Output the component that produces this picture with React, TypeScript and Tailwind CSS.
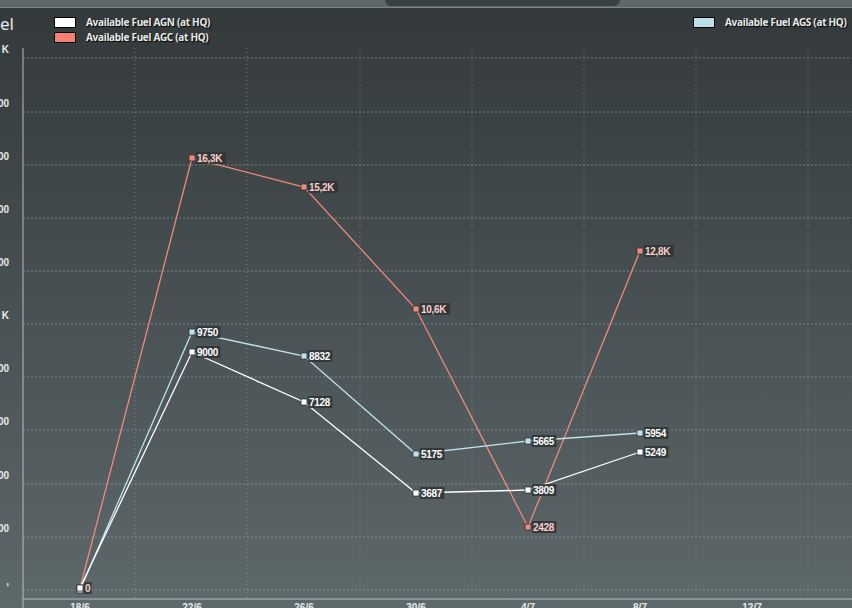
const xs = [80, 192, 304, 416, 528, 640];
const series = [
  { color: "#f08a7a", pts: [588, 158, 187, 309, 527, 251], labels: ["0", "16,3K", "15,2K", "10,6K", "2428", "12,8K"] },
  { color: "#bfe3ec", pts: [590, 332, 356, 454, 441, 433], labels: ["", "9750", "8832", "5175", "5665", "5954"] },
  { color: "#ffffff", pts: [588, 352, 402, 493, 490, 452], labels: ["", "9000", "7128", "3687", "3809", "5249"] },
];
const gridY = [58, 112, 165, 218, 271, 324, 377, 430, 484, 537, 590];
const gridX = [135, 247, 360, 472, 584, 696, 808];
const yLabels = ["K", "00", "00", "00", "00", "K", "00", "00", "00", "00", ","];
const xLabels = ["18/6", "22/6", "26/6", "30/6", "4/7", "8/7", "12/7"];

function Legend({ color, label }: { color: string; label: string }) {
  return (
    <div className="flex items-center gap-[10px] h-[15px] whitespace-nowrap">
      <span className="w-[22px] h-[11px] border border-black" style={{ background: color }} />
      <span className="text-[10px] font-bold tracking-[-0.3px] text-[#e8eaea] [text-shadow:1px_1px_1px_#000]">{label}</span>
    </div>
  );
}

export default function App() {
  return (
    <div className="w-[852px] h-[608px] overflow-hidden bg-gradient-to-b from-[#33393b] to-[#5e696c] font-['Liberation_Sans',Arial,sans-serif] relative">
      <div className="h-[8px] bg-[#5d686a] border-b border-[#7b8587] flex">
        <div className="ml-[385px] w-[235px] h-[6px] bg-[#3a4143] rounded-b-md" />
      </div>
      <div className="absolute left-0 top-[11px] text-[17px] text-[#e8eaea]">el</div>
      <div className="absolute left-[54px] top-[15px] flex flex-col">
        <Legend color="#ffffff" label="Available Fuel AGN (at HQ)" />
        <Legend color="#f88070" label="Available Fuel AGC (at HQ)" />
      </div>
      <div className="absolute left-[693px] top-[15px]">
        <Legend color="#b8e0ea" label="Available Fuel AGS (at HQ)" />
      </div>
      <svg className="absolute left-0 top-0" width="852" height="608" fontFamily="'Liberation Sans', Arial, sans-serif">
        {gridY.map((y) => (
          <line key={y} x1="23" x2="852" y1={y} y2={y} stroke="#9aa3a5" strokeOpacity="0.6" strokeDasharray="2 2" />
        ))}
        {gridX.map((x) => (
          <line key={x} x1={x} x2={x} y1="48" y2="599" stroke="#9aa3a5" strokeOpacity="0.6" strokeDasharray="1 3" />
        ))}
        <line x1="23" x2="23" y1="48" y2="608" stroke="#b5bcbe" />
        <line x1="23" x2="852" y1="599" y2="599" stroke="#b5bcbe" />
        {yLabels.map((t, i) => (
          <text key={i} x="9" y={gridY[i] - 5} textAnchor="end" fontSize="10" fontWeight="bold" fill="#e8eaea">{t}</text>
        ))}
        {xLabels.map((t, i) => (
          <text key={t} x={80 + i * 112} y="611" textAnchor="middle" fontSize="10" fontWeight="bold" fill="#e8eaea">{t}</text>
        ))}
        {series.map((s) => (
          <polyline key={s.color} fill="none" stroke={s.color} strokeWidth="1.3" points={s.pts.map((y, i) => `${xs[i]},${y}`).join(" ")} />
        ))}
        {series.map((s) =>
          s.pts.map((y, i) => (
            <g key={s.color + i}>
              <rect x={xs[i] - 3} y={y - 3} width="6" height="6" fill={s.color} stroke="#333" strokeWidth="0.8" />
              {s.labels[i] && (
                <>
                  <rect x={xs[i] + 4} y={y - 6} width={s.labels[i].length * 5.6 + 2} height="12" fill="#2f3436" fillOpacity="0.85" />
                  <text x={xs[i] + 5} y={y + 4} fontSize="10" fontWeight="bold" letterSpacing="-0.3" fill={s.color === "#f08a7a" ? "#fbd0c8" : "#ffffff"}>{s.labels[i]}</text>
                </>
              )}
            </g>
          ))
        )}
      </svg>
    </div>
  );
}
